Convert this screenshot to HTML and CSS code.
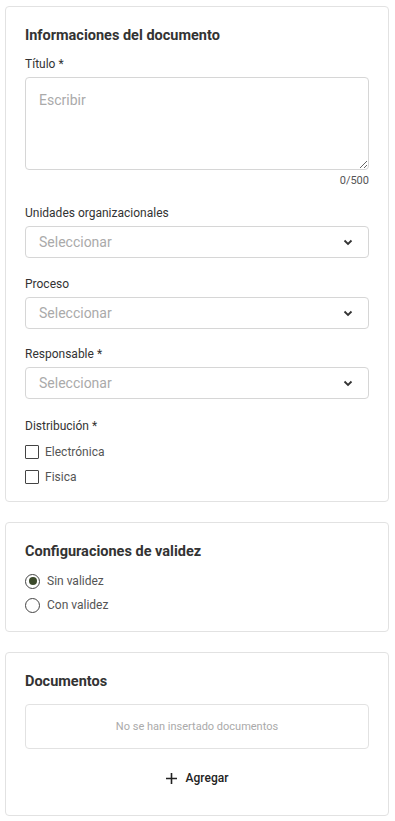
FILE: index.html
```html
<!DOCTYPE html>
<html lang="es">
<head>
  <meta charset="UTF-8" />
  <meta name="viewport" content="width=device-width, initial-scale=1.0" />
  <title>Documento</title>
  <link rel="stylesheet" href="styles.css">
</head>
<body>
  <div class="page">
    <section class="card info">
      <h3>Informaciones del documento</h3>
      <label class="label">Título *</label>
      <textarea class="textarea" placeholder="Escribir"></textarea>
      <div class="counter">0/500</div>

      <label class="label mt">Unidades organizacionales</label>
      <div class="select"><span>Seleccionar</span>
        <svg width="10" height="7" viewBox="0 0 10 7"><path d="M1.5 1.5 5 5l3.5-3.5" fill="none" stroke="#333" stroke-width="1.8"/></svg>
      </div>

      <label class="label mt wide">Proceso</label>
      <div class="select"><span>Seleccionar</span>
        <svg width="10" height="7" viewBox="0 0 10 7"><path d="M1.5 1.5 5 5l3.5-3.5" fill="none" stroke="#333" stroke-width="1.8"/></svg>
      </div>

      <label class="label mt">Responsable *</label>
      <div class="select"><span>Seleccionar</span>
        <svg width="10" height="7" viewBox="0 0 10 7"><path d="M1.5 1.5 5 5l3.5-3.5" fill="none" stroke="#333" stroke-width="1.8"/></svg>
      </div>

      <label class="label mt dist">Distribución *</label>
      <div class="checks">
        <div class="check"><span class="box"></span>Electrónica</div>
        <div class="check"><span class="box"></span>Fisica</div>
      </div>
    </section>

    <section class="card">
      <h3>Configuraciones de validez</h3>
      <div class="radios">
        <div class="radio"><span class="dot on"></span>Sin validez</div>
        <div class="radio"><span class="dot"></span>Con validez</div>
      </div>
    </section>

    <section class="card docs">
      <h3>Documentos</h3>
      <div class="empty">No se han insertado documentos</div>
      <button class="add-btn">
        <svg width="11" height="11" viewBox="0 0 11 11"><path d="M5.5 0v11M0 5.5h11" stroke="#222" stroke-width="1.6"/></svg>
        Agregar
      </button>
    </section>
  </div>
</body>
</html>
```

FILE: styles.css
```css
body { margin: 0; background: #fff; font-family: Roboto, "Liberation Sans", sans-serif; color: #333; }
.page { padding: 6px 6px 6px 5px; display: flex; flex-direction: column; gap: 20px; }
.card { border: 1px solid #e2e2e2; border-radius: 4px; padding: 20px 19px 16px; }
.card.info { padding-bottom: 15px; }
.card h3 { margin: 0; font-size: 14.5px; line-height: 18px; font-weight: 700; color: #333; }
.label { display: block; margin-top: 11px; font-size: 12px; line-height: 16px; color: #333; }
.label.mt { margin-top: 17px; }
.label.wide { margin-top: 18px; }
.label.dist { margin-top: 19px; }
.textarea { display: block; box-sizing: border-box; width: 100%; height: 93px; margin-top: 5px;
  border: 1px solid #d6d6d6; border-radius: 4px; padding: 14px 13px 10px; font-family: inherit; font-size: 14px; color: #333; outline: none; }
.textarea::placeholder { color: #aaa; }
.counter { margin-top: 4px; text-align: right; font-size: 11px; line-height: 14px; color: #555; }
.select { box-sizing: border-box; height: 32px; margin-top: 5px; border: 1px solid #d6d6d6; border-radius: 4px;
  padding: 0 15px 0 13px; display: flex; align-items: center; justify-content: space-between; font-size: 14px; color: #aaa; }
.checks { margin-top: 9px; display: flex; flex-direction: column; gap: 7px; }
.check { display: flex; align-items: center; gap: 6px; height: 18px; font-size: 12px; color: #555; }
.box { width: 12px; height: 12px; border: 1px solid #444; border-radius: 1px; }
.radios { margin-top: 10px; display: flex; flex-direction: column; gap: 4px; }
.radio { display: flex; align-items: center; gap: 7px; height: 20px; font-size: 12px; color: #555; }
.dot { box-sizing: border-box; width: 15px; height: 15px; border: 1.5px solid #444; border-radius: 50%; display: flex; align-items: center; justify-content: center; }
.dot.on::after { content: ""; width: 8px; height: 8px; border-radius: 50%; background: #3b4a2b; }
.docs { padding-bottom: 27px; }
.empty { margin-top: 13px; height: 45px; border: 1px solid #e2e2e2; border-radius: 4px; box-sizing: border-box;
  display: flex; align-items: center; justify-content: center; font-size: 11px; color: #aaa; }
.add-btn { display: flex; align-items: center; gap: 9px; margin: 19px auto 0; height: 20px; padding: 0; border: none; background: none;
  font-family: inherit; font-size: 12px; font-weight: 500; color: #222; cursor: pointer; }
```
